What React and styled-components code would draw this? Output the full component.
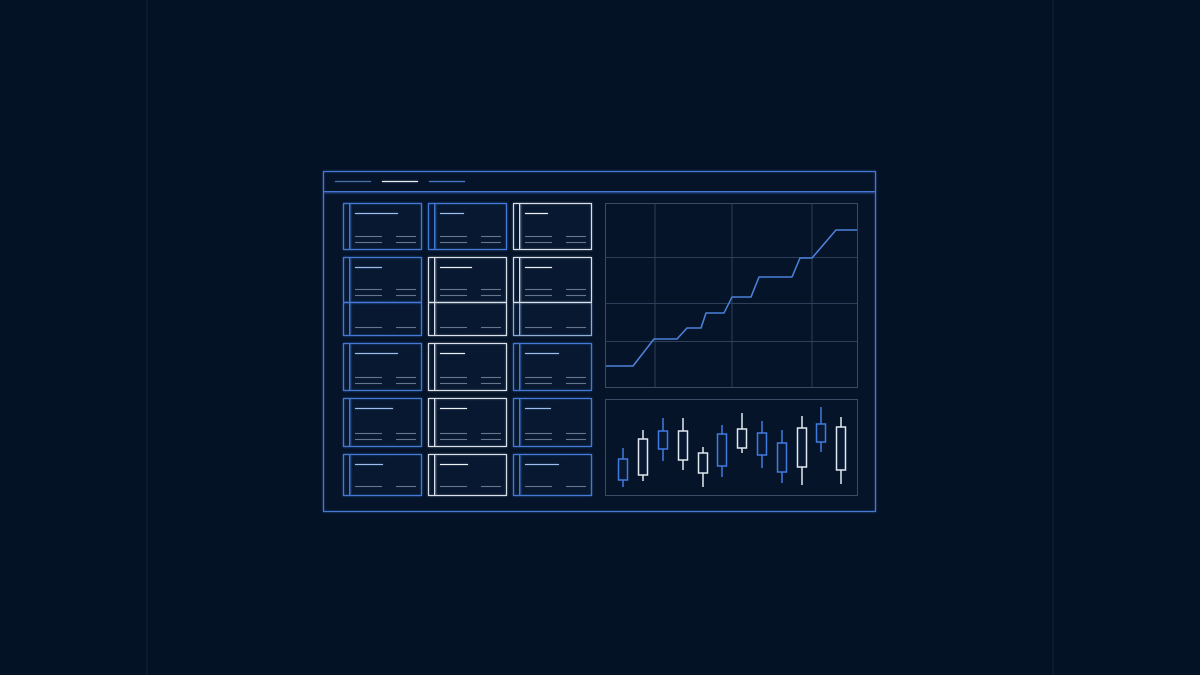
import React from 'react';
import styled, { createGlobalStyle } from 'styled-components';

const BLUE = '#4479d4';
const BLUE_GLOW = 'rgba(64, 118, 214, 0.75)';
const WHITE = '#d9e0ea';
const WHITE_GLOW = 'rgba(217, 224, 234, 0.55)';
const PALE = '#8fabd6';
const PALE_GLOW = 'rgba(130, 165, 220, 0.6)';
const BG = '#041226';

const edge = (tone) => (tone === 'white' ? WHITE : tone === 'pale' ? PALE : BLUE);
const glow = (tone) => (tone === 'white' ? WHITE_GLOW : tone === 'pale' ? PALE_GLOW : BLUE_GLOW);

const GlobalStyle = createGlobalStyle`
  html, body {
    margin: 0;
    padding: 0;
    background-color: ${BG};
    font-family: "Inter", "Liberation Sans", sans-serif;
  }
`;

const Page = styled.div`
  width: 1200px;
  height: 675px;
  box-sizing: border-box;
  padding: 171px 0 0 323px;
  display: flex;
  align-items: flex-start;
  background-color: ${BG};
  background-image:
    linear-gradient(to right, transparent 146px, #0a1a31 146px, #0a1a31 148px, transparent 148px),
    linear-gradient(to right, transparent 1052px, #0a1a31 1052px, #0a1a31 1054px, transparent 1054px);
  overflow: hidden;
`;

const Frame = styled.div`
  width: 553px;
  height: 341px;
  box-sizing: border-box;
  border: 1px solid ${BLUE};
  box-shadow: 0 0 2px ${BLUE_GLOW}, inset 0 0 2px ${BLUE_GLOW};
  background: #051429;
  display: flex;
  flex-direction: column;
`;

const Header = styled.div`
  height: 19px;
  border-bottom: 1px solid ${BLUE};
  box-shadow: 0 1px 2px ${BLUE_GLOW};
  display: flex;
  align-items: center;
  gap: 11px;
  padding-left: 11px;
`;

const Tab = styled.div`
  width: 36px;
  height: 1px;
  background: ${(p) => p.$color};
  box-shadow: 0 0 1.5px ${(p) => p.$color};
`;

const Body = styled.div`
  flex: 1;
  display: flex;
  gap: 13px;
  padding: 11px 17px 14px 19px;
`;

const CardGrid = styled.div`
  display: grid;
  grid-template-columns: repeat(3, 79px);
  grid-template-rows: 47px 79px 48px 49px 42px;
  column-gap: 6px;
  row-gap: 7px;
`;

const Card = styled.div`
  box-sizing: border-box;
  background: #071830;
  display: flex;
  flex-direction: column;
`;

// each section draws its own outline so a card can change tone half way down
const Section = styled.div`
  flex: ${(p) => p.$grow || 1};
  display: flex;
  border: 1px solid ${(p) => edge(p.$tone)};
  border-top-width: ${(p) => (p.$joined ? 0 : 1)}px;
  border-bottom-width: ${(p) => (p.$open ? 0 : 1)}px;
  box-shadow: 0 0 2px ${(p) => glow(p.$tone)}, inset 0 0 2px ${(p) => glow(p.$tone)};
`;

const Divider = styled.div`
  height: 1px;
  background: ${(p) => edge(p.$tone)};
  box-shadow: 0 0 2px ${(p) => glow(p.$tone)};
  position: relative;
  z-index: 1;
`;

const Spine = styled.div`
  width: 5px;
  border-right: 1px solid ${(p) => edge(p.$tone)};
  box-shadow: 1px 0 2px ${(p) => glow(p.$tone)};
`;

const Content = styled.div`
  flex: 1;
  display: flex;
  flex-direction: column;
  padding: ${(p) => p.$pad};
`;

const Title = styled.div`
  height: 1px;
  width: ${(p) => p.$w}px;
  background: ${(p) => (p.$tone === 'blue' ? '#9dbdec' : '#eef2f7')};
  box-shadow: 0 0 1.5px
    ${(p) => (p.$tone === 'blue' ? 'rgba(140,180,236,0.8)' : 'rgba(238,242,247,0.7)')};
`;

const Spacer = styled.div`
  flex: 1;
`;

const MetaRow = styled.div`
  display: flex;
  justify-content: space-between;
  & + & {
    margin-top: 5px;
  }
`;

const Meta = styled.div`
  height: 1px;
  width: ${(p) => p.$w}px;
  background: #65758b;
  box-shadow: 0 0 1px rgba(101, 117, 139, 0.6);
`;

const Right = styled.div`
  flex: 1;
  display: flex;
  flex-direction: column;
  gap: 11px;
`;

const Panel = styled.div`
  box-sizing: border-box;
  height: ${(p) => p.$h}px;
  border: 1px solid #3a4b66;
  svg {
    display: block;
  }
`;

const rows = [
  { kind: 'std', titles: [43, 24, 23], tones: ['blue', 'blue', 'white'] },
  { kind: 'double', titles: [27, 32, 27], tones: ['blue', 'white', 'white'], lower: ['blue', 'white', 'pale'] },
  { kind: 'std', titles: [43, 25, 34], tones: ['blue', 'white', 'blue'] },
  { kind: 'std', titles: [38, 27, 26], tones: ['blue', 'white', 'blue'] },
  { kind: 'short', titles: [28, 28, 34], tones: ['blue', 'white', 'blue'] },
];

const Meta2 = ({ count }) => (
  <>
    {Array.from({ length: count }).map((_, i) => (
      <MetaRow key={i}>
        <Meta $w={27} />
        <Meta $w={20} />
      </MetaRow>
    ))}
  </>
);

const TradeCard = ({ kind, title, tone, lowerTone }) => {
  if (kind === 'double') {
    return (
      <Card>
        <Section $grow={44} $tone={tone} $open>
          <Spine $tone={tone} />
          <Content $pad="9px 5px 6px 5px">
            <Title $w={title} $tone={tone} />
            <Spacer />
            <Meta2 count={2} />
          </Content>
        </Section>
        <Divider $tone={tone} />
        <Section $grow={32} $tone={lowerTone} $joined>
          <Spine $tone={lowerTone} />
          <Content $pad="0 5px 7px 5px">
            <Spacer />
            <Meta2 count={1} />
          </Content>
        </Section>
      </Card>
    );
  }
  return (
    <Card>
      <Section $tone={tone}>
        <Spine $tone={tone} />
        <Content $pad={kind === 'short' ? '9px 5px 8px 5px' : '9px 5px 6px 5px'}>
          <Title $w={title} $tone={tone} />
          <Spacer />
          <Meta2 count={kind === 'short' ? 1 : 2} />
        </Content>
      </Section>
    </Card>
  );
};

const stepPoints = [
  [0, 162], [27, 162], [48, 135], [71, 135], [81, 124], [95, 124],
  [100, 109], [118, 109], [126, 93], [145, 93], [153, 73], [186, 73],
  [194, 54], [206, 54], [230, 26], [253, 26],
];

const LineChart = () => (
  <svg width="251" height="183" viewBox="0 0 251 183">
    {[49, 126, 206].map((x) => (
      <line key={x} x1={x} y1="0" x2={x} y2="183" stroke="#2e3f59" strokeWidth="1" />
    ))}
    {[53.5, 99.5, 137.5].map((y) => (
      <line key={y} x1="0" y1={y} x2="251" y2={y} stroke="#2e3f59" strokeWidth="1" />
    ))}
    <polyline
      points={stepPoints.map(([x, y]) => `${x},${y}`).join(' ')}
      fill="none"
      stroke="#4a80d8"
      strokeWidth="1.6"
      strokeLinejoin="round"
    />
  </svg>
);

// x, wickTop, bodyTop, bodyBottom, wickBottom, white?
const candles = [
  [623, 448, 459, 480, 487, false],
  [643, 430, 439, 475, 481, true],
  [663, 418, 431, 449, 461, false],
  [683, 418, 431, 460, 470, true],
  [703, 447, 453, 473, 487, true],
  [722, 425, 434, 466, 477, false],
  [742, 413, 429, 448, 453, true],
  [762, 421, 433, 455, 468, false],
  [782, 430, 443, 472, 483, false],
  [802, 416, 428, 467, 485, true],
  [821, 407, 424, 442, 452, false],
  [841, 417, 427, 470, 484, true],
];

const CandleChart = () => (
  <svg width="251" height="95" viewBox="606 400 251 95">
    {candles.map(([x, wt, bt, bb, wb, w], i) => {
      const c = w ? '#e2e8f0' : '#427be0';
      return (
        <g key={i} stroke={c} strokeWidth="1.5" fill="#071830">
          <line x1={x} y1={wt} x2={x} y2={bt} />
          <line x1={x} y1={bb} x2={x} y2={wb} />
          <rect x={x - 4.5} y={bt} width="9" height={bb - bt} />
        </g>
      );
    })}
  </svg>
);

export default function App() {
  return (
    <>
      <GlobalStyle />
      <Page>
        <Frame>
          <Header>
            <Tab $color="#4a6ea8" />
            <Tab $color="#e6ebf2" />
            <Tab $color="#4778c8" />
          </Header>
          <Body>
            <CardGrid>
              {rows.map((row, r) =>
                row.titles.map((t, c) => (
                  <TradeCard
                    key={`${r}-${c}`}
                    kind={row.kind}
                    title={t}
                    tone={row.tones[c]}
                    lowerTone={row.lower ? row.lower[c] : row.tones[c]}
                  />
                ))
              )}
            </CardGrid>
            <Right>
              <Panel $h={185}>
                <LineChart />
              </Panel>
              <Panel $h={97}>
                <CandleChart />
              </Panel>
            </Right>
          </Body>
        </Frame>
      </Page>
    </>
  );
}
